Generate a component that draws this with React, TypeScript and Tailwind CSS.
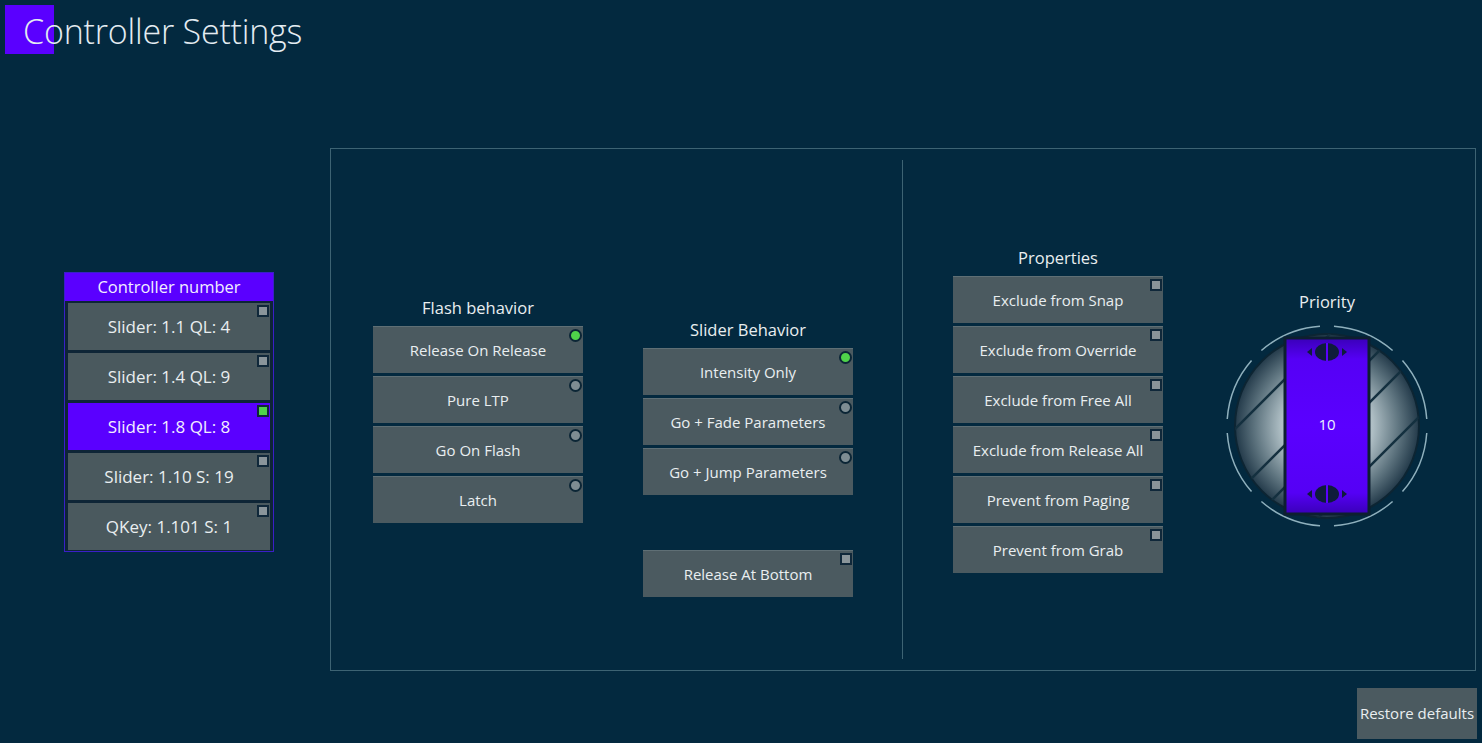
import React from "react";

const FONT = { fontFamily: '"Open Sans", "Noto Sans", sans-serif' };

function Indicator({ kind, on }: { kind: "circle" | "square"; on?: boolean }) {
  if (kind === "circle") {
    return (
      <span
        className={
          "absolute right-[1px] top-[2px] h-[13px] w-[13px] rounded-full border-2 border-[#0c2636] " +
          (on ? "bg-[#4fd34a]" : "bg-[#7e8d93]")
        }
      />
    );
  }
  return (
    <span
      className={
        "absolute right-[1px] top-[2px] h-[12px] w-[12px] border-2 border-[#10283a] " +
        (on ? "bg-[#4fd34a]" : "bg-[#8a959a]")
      }
    />
  );
}

function Btn({ label, kind, on }: { label: string; kind: "circle" | "square"; on?: boolean }) {
  return (
    <div className="relative flex h-[47px] w-[210px] items-center justify-center border-t border-[#5f6f75] bg-[#4b5a60] text-[15px] text-[#e9eef0]">
      {label}
      <Indicator kind={kind} on={on} />
    </div>
  );
}

function Label({ text }: { text: string }) {
  return (
    <div className="mb-[4px] flex h-[22px] w-[210px] items-center justify-center text-[16.5px] text-[#e9eef0]">
      {text}
    </div>
  );
}

function Knob() {
  const cx = 110;
  const cy = 110;
  const arcs: string[] = [];
  for (let k = 0; k < 8; k++) {
    const a1 = ((k * 45 + 4) * Math.PI) / 180;
    const a2 = ((k * 45 + 41) * Math.PI) / 180;
    const r = 100;
    arcs.push(
      `M ${cx + r * Math.cos(a1)} ${cy + r * Math.sin(a1)} A ${r} ${r} 0 0 1 ${cx + r * Math.cos(a2)} ${cy + r * Math.sin(a2)}`
    );
  }
  const lines = [131, 197, 239, 303];
  return (
    <svg width="220" height="220" viewBox="0 0 220 220">
      <defs>
        <radialGradient id="disk" cx="50%" cy="50%" r="50%">
          <stop offset="0%" stopColor="#e2eaec" />
          <stop offset="50%" stopColor="#aebec4" />
          <stop offset="78%" stopColor="#5f7580" />
          <stop offset="100%" stopColor="#233a4a" />
        </radialGradient>
        <linearGradient id="band" x1="0" y1="0" x2="0" y2="1">
          <stop offset="0%" stopColor="#3a00b8" />
          <stop offset="12%" stopColor="#5500f5" />
          <stop offset="50%" stopColor="#5a00ff" />
          <stop offset="88%" stopColor="#5500f5" />
          <stop offset="100%" stopColor="#3a00b8" />
        </linearGradient>
        <clipPath id="diskclip">
          <circle cx={cx} cy={cy} r={92} />
        </clipPath>
      </defs>
      {arcs.map((d, i) => (
        <path key={i} d={d} fill="none" stroke="#8fb0bd" strokeWidth="1.5" />
      ))}
      <circle cx={cx} cy={cy} r={92} fill="url(#disk)" stroke="#0d2533" strokeWidth="2" />
      <g clipPath="url(#diskclip)">
        {lines.map((c, i) => (
          <line key={i} x1={0} y1={c} x2={220} y2={c - 220} stroke="#14303f" strokeWidth="2.5" />
        ))}
      </g>
      <rect x="68" y="22" width="84" height="176" fill="url(#band)" stroke="#0d1f30" strokeWidth="3" />
      {[36, 178].map((y) => (
        <g key={y}>
          <ellipse cx={110} cy={y} rx={12} ry={9} fill="#0f1c3c" />
          <line x1={110} y1={y - 9} x2={110} y2={y + 9} stroke="#5a00ff" strokeWidth="2" />
          <polygon points={`${90},${y} ${95},${y - 4} ${95},${y + 4}`} fill="#0f1c3c" />
          <polygon points={`${130},${y} ${125},${y - 4} ${125},${y + 4}`} fill="#0f1c3c" />
        </g>
      ))}
      <text x={110} y={110} textAnchor="middle" dominantBaseline="middle" fill="#eef2ff" fontSize="15" style={FONT}>
        10
      </text>
    </svg>
  );
}

export default function App() {
  const controllers = [
    { label: "Slider: 1.1 QL: 4" },
    { label: "Slider: 1.4 QL: 9" },
    { label: "Slider: 1.8 QL: 8", sel: true },
    { label: "Slider: 1.10 S: 19" },
    { label: "QKey: 1.101 S: 1" },
  ];
  return (
    <div className="flex h-[743px] w-[1482px] flex-col overflow-hidden bg-[#03293f] text-[#e9eef0]" style={FONT}>
      {/* Title */}
      <div className="flex h-[148px] items-start">
        <div className="ml-[5px] mt-[5px] h-[49px] w-[49px] shrink-0 bg-[#5a00ff]" />
        <div className="-ml-[31px] mt-[8px] text-[34px] font-light leading-[46px] tracking-[-0.2px] text-[#e4ecf2]">
          Controller Settings
        </div>
      </div>

      {/* Body */}
      <div className="flex items-start">
        {/* Controller list */}
        <div className="ml-[64px] mt-[124px] flex w-[210px] flex-col border border-[#3b1fc8] bg-[#0e2536]">
          <div className="flex h-[28px] items-center justify-center bg-[#5a00ff] text-[16.5px] text-[#f2eeff]">
            Controller number
          </div>
          <div className="flex flex-col gap-[3px] px-[3px] pb-[1px] pt-[2px]">
            {controllers.map((c) => (
              <div
                key={c.label}
                className={
                  "relative flex h-[47px] items-center justify-center text-[17px] " +
                  (c.sel ? "bg-[#5a00ff] text-[#f2eeff]" : "bg-[#4a595e] text-[#e9eef0]")
                }
              >
                {c.label}
                <Indicator kind="square" on={c.sel} />
              </div>
            ))}
          </div>
        </div>

        {/* Main panel */}
        <div className="ml-[56px] flex h-[523px] w-[1146px] border border-[#3d6373]">
          {/* Flash */}
          <div className="ml-[42px] flex flex-col gap-[3px] pt-[148px]">
            <Label text="Flash behavior" />
            <Btn label="Release On Release" kind="circle" on />
            <Btn label="Pure LTP" kind="circle" />
            <Btn label="Go On Flash" kind="circle" />
            <Btn label="Latch" kind="circle" />
          </div>
          {/* Slider */}
          <div className="ml-[60px] flex flex-col gap-[3px] pt-[170px]">
            <Label text="Slider Behavior" />
            <Btn label="Intensity Only" kind="circle" on />
            <Btn label="Go + Fade Parameters" kind="circle" />
            <Btn label="Go + Jump Parameters" kind="circle" />
            <div className="mt-[52px]">
              <Btn label="Release At Bottom" kind="square" />
            </div>
          </div>
          {/* Divider */}
          <div className="my-[11px] ml-[49px] w-px bg-[#3d6373]" />
          {/* Properties */}
          <div className="ml-[50px] flex flex-col gap-[3px] pt-[98px]">
            <Label text="Properties" />
            <Btn label="Exclude from Snap" kind="square" />
            <Btn label="Exclude from Override" kind="square" />
            <Btn label="Exclude from Free All" kind="square" />
            <Btn label="Exclude from Release All" kind="square" />
            <Btn label="Prevent from Paging" kind="square" />
            <Btn label="Prevent from Grab" kind="square" />
          </div>
          {/* Priority */}
          <div className="ml-[54px] flex w-[220px] flex-col items-center pt-[142px]">
            <div className="flex h-[22px] items-center justify-center text-[16.5px] text-[#e9eef0]">Priority</div>
            <div className="mt-[3px]">
              <Knob />
            </div>
          </div>
        </div>
      </div>

      {/* Restore */}
      <div className="mr-[5px] mt-[17px] flex justify-end">
        <div className="flex h-[51px] w-[120px] items-center justify-center bg-[#4b5a60] text-[15px] text-[#e9eef0]">
          Restore defaults
        </div>
      </div>
    </div>
  );
}
